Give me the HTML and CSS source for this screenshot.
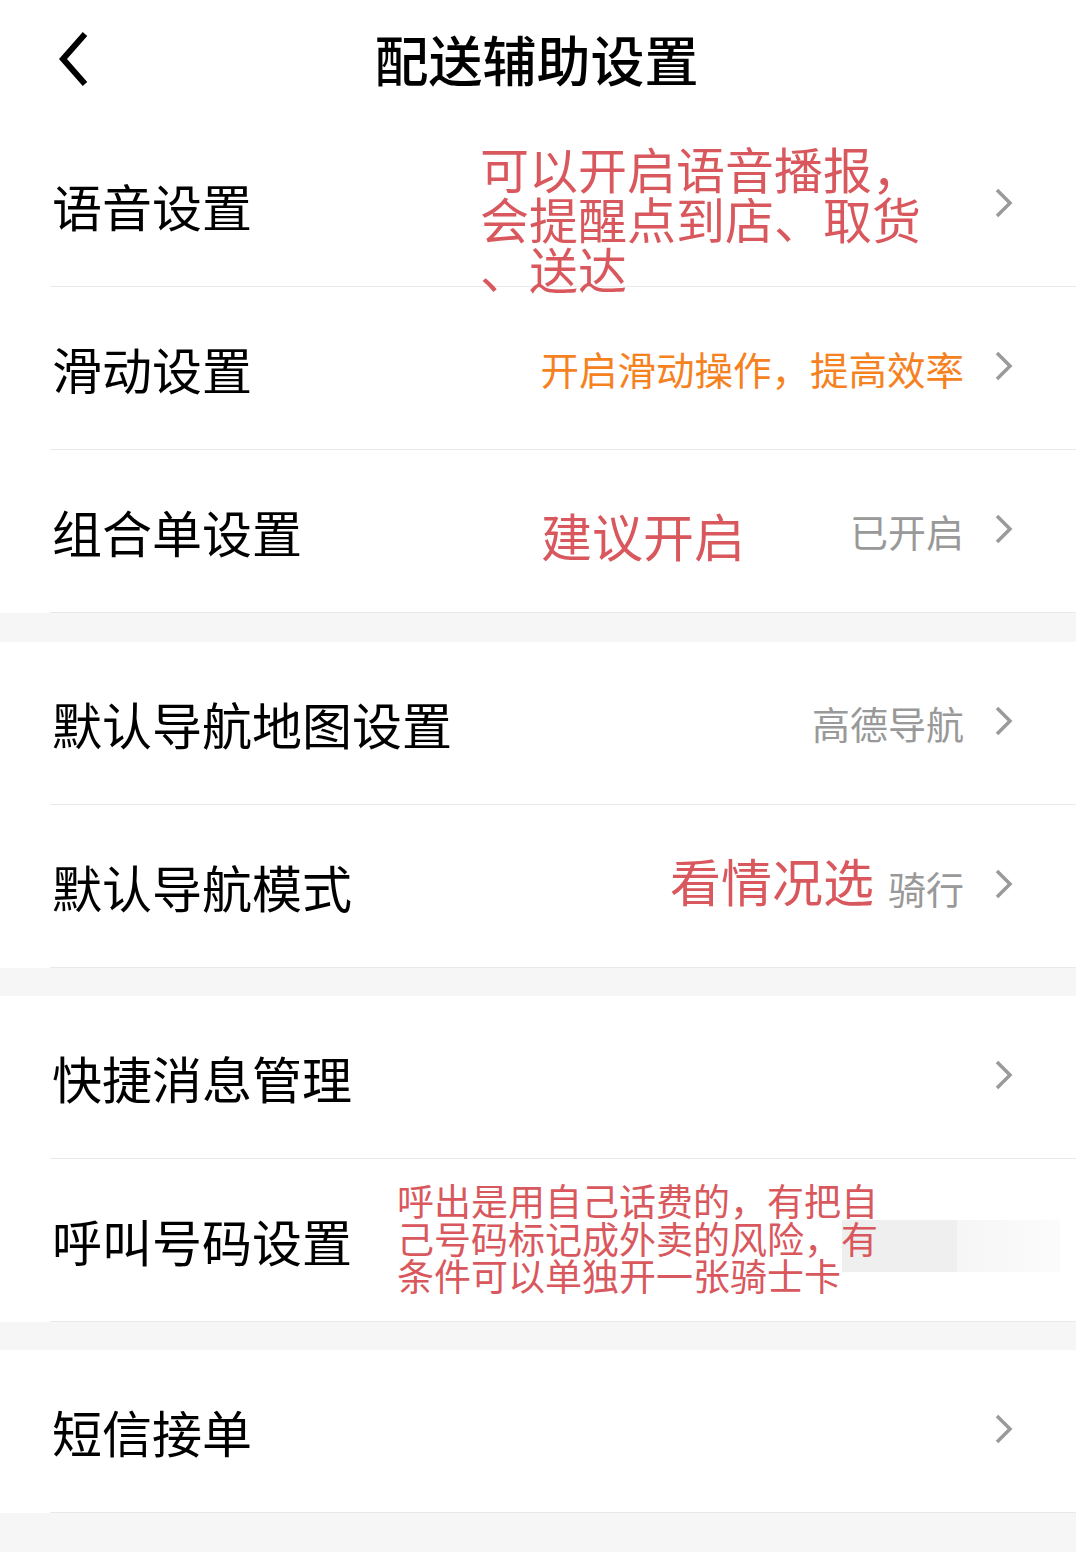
FILE: index.html
```html
<!DOCTYPE html>
<html lang="zh-CN">
<head>
<meta charset="utf-8">
<title>配送辅助设置</title>
<link rel="stylesheet" href="styles.css">
</head>
<body>
<div class="page">
  <header class="topbar">
    <svg class="back" width="40" height="60" viewBox="0 0 40 60">
      <path d="M30 6 L8 31 L30 56" fill="none" stroke="#000" stroke-width="6"/>
    </svg>
    <h1 class="title">配送辅助设置</h1>
  </header>

  <section class="group">
    <div class="row">
      <span class="label">语音设置</span>
      <span class="note note-voice">可以开启语音播报，会提醒点到店、取货、送达</span>
      <span class="right"><svg class="chev" viewBox="0 0 20 32"><path d="M3 3 L16 16 L3 29" /></svg></span>
    </div>
    <div class="row">
      <span class="label">滑动设置</span>
      <span class="right"><span class="value orange">开启滑动操作，提高效率</span><svg class="chev" viewBox="0 0 20 32"><path d="M3 3 L16 16 L3 29" /></svg></span>
    </div>
    <div class="row">
      <span class="label">组合单设置</span>
      <span class="big-red suggest">建议开启</span>
      <span class="right"><span class="value">已开启</span><svg class="chev" viewBox="0 0 20 32"><path d="M3 3 L16 16 L3 29" /></svg></span>
    </div>
  </section>

  <section class="group">
    <div class="row">
      <span class="label">默认导航地图设置</span>
      <span class="right"><span class="value">高德导航</span><svg class="chev" viewBox="0 0 20 32"><path d="M3 3 L16 16 L3 29" /></svg></span>
    </div>
    <div class="row">
      <span class="label">默认导航模式</span>
      <span class="right"><span class="big-red pick">看情况选</span><span class="value ride">骑行</span><svg class="chev" viewBox="0 0 20 32"><path d="M3 3 L16 16 L3 29" /></svg></span>
    </div>
  </section>

  <section class="group">
    <div class="row">
      <span class="label">快捷消息管理</span>
      <span class="right"><svg class="chev" viewBox="0 0 20 32"><path d="M3 3 L16 16 L3 29" /></svg></span>
    </div>
    <div class="row">
      <span class="label">呼叫号码设置</span>
      <span class="blur blur-a"></span>
      <span class="blur blur-b"></span>
      <span class="note note-call">呼出是用自己话费的，有把自己号码标记成外卖的风险，有条件可以单独开一张骑士卡</span>
    </div>
  </section>

  <section class="group">
    <div class="row">
      <span class="label">短信接单</span>
      <span class="right"><svg class="chev" viewBox="0 0 20 32"><path d="M3 3 L16 16 L3 29" /></svg></span>
    </div>
  </section>
</div>
</body>
</html>
```

FILE: styles.css
```css
* { box-sizing: border-box; margin: 0; padding: 0; }

html, body {
  background: #f6f6f6;
}

body {
  width: 1076px;
  min-height: 1552px;
  font-family: "Noto Sans CJK SC", "Noto Sans", sans-serif;
  color: #000;
}

.page {
  display: flex;
  flex-direction: column;
}

.topbar {
  position: relative;
  height: 124px;
  background: #fff;
  display: flex;
  align-items: center;
  justify-content: center;
}

.back {
  position: absolute;
  left: 55px;
  top: 28px;
}

.title {
  font-size: 54px;
  font-weight: 500;
  line-height: 1;
  margin-top: -6px;
  margin-left: -3px;
}

.group {
  background: #fff;
  margin-bottom: 28px;
}

.group:first-of-type {
  margin-bottom: 29px;
}

.row {
  position: relative;
  height: 163px;
  margin-left: 50px;
  padding-left: 2px;
  padding-right: 62px;
  border-bottom: 1px solid #e9e9e9;
  display: flex;
  align-items: center;
}

.label {
  font-size: 50px;
  line-height: 1;
  color: #000;
}

.right {
  margin-left: auto;
  display: flex;
  align-items: center;
}

.value {
  font-size: 38px;
  color: #999;
  line-height: 1;
  margin-right: 30px;
}

.value.orange {
  color: #f5821f;
  font-size: 38.5px;
}

.chev {
  width: 20px;
  height: 32px;
  margin-top: -4px;
}

.chev path {
  fill: none;
  stroke: #9a9a9a;
  stroke-width: 3.5;
}

.big-red {
  font-size: 51px;
  line-height: 1;
  color: #d9585d;
}

.suggest {
  position: absolute;
  left: 491px;
  top: 60px;
}

.pick {
  margin-right: 14px;
  margin-top: -12px;
}

.ride {
  margin-top: 4px;
}

.note {
  position: absolute;
  color: #d9585d;
}

.note-voice {
  left: 430px;
  top: 19px;
  width: 452px;
  font-size: 49px;
  line-height: 50px;
  line-break: anywhere;
  word-break: break-all;
}

.note-call {
  left: 347px;
  top: 23px;
  width: 490px;
  font-size: 37px;
  line-height: 37.5px;
}

.blur {
  position: absolute;
}

.blur-a {
  left: 792px;
  top: 61px;
  width: 115px;
  height: 52px;
  background: #efefef;
}

.blur-b {
  left: 907px;
  top: 61px;
  width: 103px;
  height: 52px;
  background: linear-gradient(90deg, #f6f6f6, #fbfbfb);
}
```
